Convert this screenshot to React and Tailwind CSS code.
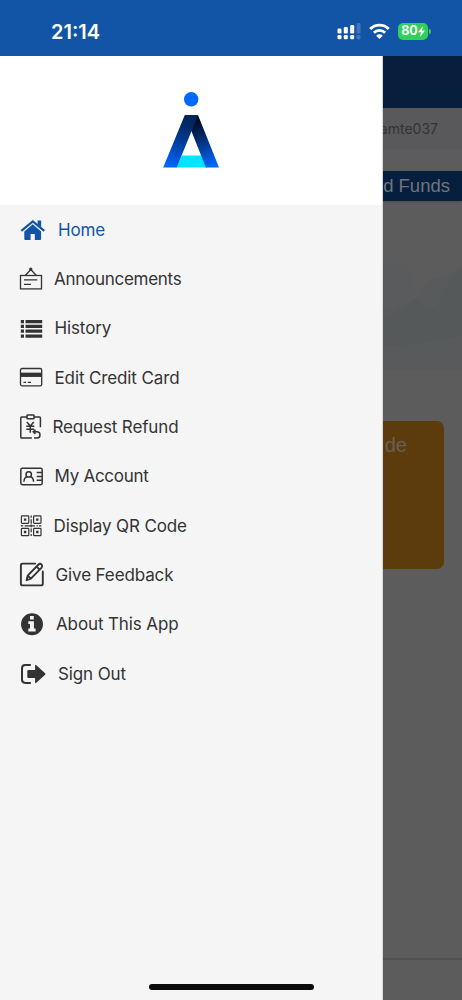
// Icons
const HomeIcon = () => (
    <svg className="size-[30px]" viewBox="0 0 30 30" fill="currentColor">
        <path d="M19.6 5.6h3.6v6.6l-3.600-3z" />
        <path d="M3.300 15.900 14.800 6.400l11.500 9.500" fill="none" stroke="currentColor" strokeWidth="2.200" />
        <path d="M14.800 9.300 6.300 16.400v7.600q0 1 1 1h5.300v-6.100h4.200V25h5.300q1 0 1-1v-7.600z" />
    </svg>
);

const AnnouncementIcon = () => (
    <svg className="size-[30px]" viewBox="0 0 30 30" fill="none" stroke="currentColor" strokeWidth="1.300">
        <rect x="2.500" y="11.500" width="21" height="13.400" />
        <path d="M7.300 11.500 12.800 5.500l5.500 6M6 15.800h13.300M6 20.300h7" />
        <circle cx="12.800" cy="5.200" r="1" fill="currentColor" />
    </svg>
);

const HistoryIcon = () => (
    <svg className="size-[30px]" viewBox="0 0 30 30" fill="currentColor">
        <path d="M2.800 6h3.200v3.200H2.800zM7.500 6h16.700v3.200H7.500zM2.800 10.800h3.200V14H2.800zM7.500 10.800h16.700V14H7.500zM2.800 15.600h3.200v3.200H2.800zM7.500 15.600h16.700v3.200H7.500zM2.800 20.500h3.200v3.200H2.800zM7.500 20.500h16.700v3.200H7.500z" />
    </svg>
);

const CardIcon = () => (
    <svg className="size-[30px]" viewBox="0 0 30 30" fill="none" stroke="currentColor" strokeWidth="1.300">
        <rect x="2.500" y="5.500" width="21.200" height="17.300" rx="1.600" />
        <path d="M2.500 11.800h21.200" strokeWidth="4.300" />
        <path d="M5.500 19.300h2.600M9.800 19.300h3.200" />
    </svg>
);

const RefundIcon = () => (
    <svg className="size-[30px]" viewBox="0 0 30 30" fill="none" stroke="currentColor" strokeWidth="1.500">
        <path d="M9 4.900H3.600q-.8 0-.8.800v19.500q0 .8.8.800h10.300M16 4.900h5.600q.8 0 .8.800v9.500" />
        <rect x="9" y="2.900" width="7" height="3.900" rx=".6" />
        <path d="M8.800 10l3.500 4 3.500-4M12.300 14v6.800M8.300 14.200h8M8.300 17.200h8" />
        <path d="M15.500 19.800h3.400a3.100 3.100 0 0 1 0 6.200H16M17.500 17.700l-2.300 2.100 2.300 2.100" />
    </svg>
);

const AccountIcon = () => (
    <svg className="size-[30px]" viewBox="0 0 30 30" fill="none" stroke="currentColor" strokeWidth="1.500">
        <rect x="2.800" y="6.300" width="21.400" height="16.400" rx="1.600" />
        <circle cx="10.700" cy="12.400" r="2.700" />
        <path d="M5.900 19.700q.3-4.400 3.300-5M15.600 19.700q-.3-4.400-3.300-5M18.700 10.500h5.200M18.700 14.400h5.200M18.700 18.300h5.200" />
    </svg>
);

const QrIcon = () => (
    <svg className="size-[30px]" viewBox="0 0 30 30" fill="none" stroke="currentColor" strokeWidth="1.200">
        <rect x="3.400" y="4.900" width="7.400" height="7.400" rx=".8" />
        <rect x="15.600" y="4.900" width="7.400" height="7.400" rx=".8" />
        <rect x="3.400" y="17.300" width="7.400" height="7.400" rx=".8" />
        <rect x="15.600" y="17.300" width="7.400" height="7.400" rx=".8" />
        <path d="M5.900 8.600h2.400M18.100 8.600h2.400M5.900 21h2.400M18.100 21h2.400" strokeWidth="2.400" />
        <path d="M13.200 4.500v2.200M13.200 8.300v4.500M13.200 13.500v2.700M13.200 17.500v3.800M13.200 22.900v2.200M2.800 14.800h2.400M6.600 14.800h10.400M18.500 14.800h1.300M21 14.800h2.400" />
    </svg>
);

const FeedbackIcon = () => (
    <svg className="size-[30px]" viewBox="0 0 30 30" fill="none" stroke="currentColor" strokeWidth="1.900" strokeLinecap="round" strokeLinejoin="round">
        <path d="M17.200 3.600H4.600q-1.700 0-1.700 1.700v18.400q0 1.700 1.700 1.700h18.500q1.700 0 1.700-1.700V11.500" />
        <path d="M8.600 20.200l1.100-4.600L20.500 4.500q1.500-1.300 3.100 0 1.300 1.500 0 3.100L12.900 18.700zM18.600 6.600l3 3M9.700 15.600l3.200 3.100" strokeWidth="1.900" />
    </svg>
);

const InfoIcon = () => (
    <svg className="size-[30px]" viewBox="0 0 30 30">
        <circle cx="14" cy="14.300" r="11" fill="currentColor" />
        <path d="M12 5.900h3.800v3.600H12zM10.300 11.200h5.600v7.300h1.700v2.900h-7.300v-2.900H12V14h-1.700z" fill="#f5f5f5" />
    </svg>
);

const SignOutIcon = () => (
    <svg className="size-[30px]" viewBox="0 0 30 30">
        <path d="M12.800 6.100H7.300q-3.300 0-3.300 3.300v11.200q0 3.300 3.300 3.300h5.500" fill="none" stroke="currentColor" strokeWidth="2" />
        <path d="M10.300 10.900h6.800V6.700q0-1.400 1.200-.5l8.800 8.100q.8.700 0 1.400l-8.800 8.100q-1.200.9-1.200-.5v-4.200h-6.800q-1 0-1-1v-6.200q0-1 1-1z" fill="currentColor" />
    </svg>
);

const Logo = () => (
    <svg className="h-[78px] w-[58px]" viewBox="0 0 58 78">
        <defs>
            <linearGradient id="leftLeg" x1="24" y1="30" x2="6" y2="76" gradientUnits="userSpaceOnUse">
                <stop offset="0" stopColor="#00265c" />
                <stop offset="0.350" stopColor="#003789" />
                <stop offset="1" stopColor="#0068ff" />
            </linearGradient>
            <linearGradient id="rightLeg" x1="32" y1="30" x2="50" y2="76" gradientUnits="userSpaceOnUse">
                <stop offset="0" stopColor="#000b24" />
                <stop offset="0.300" stopColor="#00245c" />
                <stop offset="1" stopColor="#006aff" />
            </linearGradient>
        </defs>
        <circle cx="29.200" cy="8.300" r="7.200" fill="#0068ff" />
        <path d="M20 64.500h20l5.500 12H14.500z" fill="#00e5ff" />
        <path d="M36 24 57 76.500H43.800L29.200 39.500 25 30z" fill="url(#rightLeg)" />
        <path d="M22.800 24H36L14.800 76.500H1.200z" fill="url(#leftLeg)" />
    </svg>
);

const menuItems = [
    { label: "Home", Icon: HomeIcon, gap: "ml-2.5", color: "text-[#1255a6]" },
    { label: "Announcements", Icon: AnnouncementIcon, gap: "ml-1.5 tracking-[-0.270px]", color: "text-[#333]" },
    { label: "History", Icon: HistoryIcon, gap: "ml-[6.500px]", color: "text-[#333]" },
    { label: "Edit Credit Card", Icon: CardIcon, gap: "ml-[6.500px]", color: "text-[#333]" },
    { label: "Request Refund", Icon: RefundIcon, gap: "ml-[4.500px]", color: "text-[#333]" },
    { label: "My Account", Icon: AccountIcon, gap: "ml-[6.500px] tracking-[-0.270px]", color: "text-[#333]" },
    { label: "Display QR Code", Icon: QrIcon, gap: "ml-[5.500px]", color: "text-[#333]" },
    { label: "Give Feedback", Icon: FeedbackIcon, gap: "ml-[7.500px]", color: "text-[#333]" },
    { label: "About This App", Icon: InfoIcon, gap: "ml-2", color: "text-[#333]" },
    { label: "Sign Out", Icon: SignOutIcon, gap: "ml-2.5", color: "text-[#333]" },
];

function StatusBar() {
    return (
        <div className="flex h-14 shrink-0 items-center justify-between bg-[#1255a6] pt-[6px] pr-[31px] pl-[51px] text-white">
            <div className="pt-px text-[20px] leading-none font-semibold">21:14</div>
            <div className="flex items-center">
                <svg className="h-[17px] w-6" viewBox="0 0 24 17" fill="currentColor">
                    <rect x="0.500" y="5.500" width="4" height="5" rx="1.300" />
                    <rect x="6.800" y="4" width="4" height="6.500" rx="1.300" />
                    <rect x="13.200" y="2" width="4" height="8.500" rx="1.300" />
                    <rect x="0.500" y="12" width="4" height="4.200" rx="1.300" />
                    <rect x="6.800" y="12" width="4" height="4.200" rx="1.300" />
                    <rect x="13.200" y="12" width="4" height="4.200" rx="1.300" />
                    <rect x="19.500" y="0" width="4" height="10.500" rx="1.300" opacity="0.200" />
                    <rect x="19.500" y="12" width="4" height="4.200" rx="1.300" opacity="0.200" />
                </svg>
                <svg className="ml-2 h-[17px] w-[21px]" viewBox="0 0 21 17" fill="none" stroke="currentColor" strokeWidth="2.900">
                    <path d="M1.200 6a13.200 13.200 0 0 1 18.600 0M4.900 9.700a8 8 0 0 1 11.200 0" />
                    <path d="M10.500 16 7.200 12.700a4.700 4.700 0 0 1 6.600 0z" fill="currentColor" stroke="none" />
                </svg>
                <div className="ml-2 flex h-[17px] w-[30px] items-center justify-center rounded-[5px] bg-[#30d158] pt-px text-[12.500px] leading-none font-bold">
                    80
                    <svg className="h-[11px] w-[7px]" viewBox="0 0 7 11" fill="currentColor">
                        <path d="M5 0 0 6.200H3L2 11l5-6.400H4z" />
                    </svg>
                </div>
                <div className="ml-px h-[5px] w-[2px] rounded-r-full bg-[#30d158]" />
            </div>
        </div>
    );
}

function Drawer() {
    return (
        <aside className="flex w-[383px] shrink-0 flex-col border-r border-[#d8d8d8] bg-[#f5f5f5]">
            <div className="flex h-[149px] shrink-0 justify-center bg-white pt-[35px]">
                <Logo />
            </div>
            <nav className="flex flex-col pt-[0.500px]">
                {menuItems.map(({ label, Icon, gap, color }) => (
                    <a key={label} className={`flex h-[49.300px] items-center pl-[18px] ${color}`}>
                        <Icon />
                        <span className={`pt-px text-[17px] tracking-[-0.120px] ${gap}`}>{label}</span>
                    </a>
                ))}
            </nav>
            <div className="mt-auto mr-[68px] mb-[10px] h-[6px] w-[165px] self-end rounded-full bg-[#0b0b0b]" />
        </aside>
    );
}

function DimmedPage() {
    return (
        <main className="flex flex-1 flex-col overflow-hidden bg-[#5c5c5c] whitespace-nowrap">
            <div className="h-[52px] shrink-0 bg-[#071f3d]" />
            <div className="flex h-[41px] shrink-0 items-center justify-end bg-[#59595b] pr-6 text-[14px] text-[#333]">
                amte037
            </div>
            <div className="mt-[22px] flex h-[30px] shrink-0 items-center justify-end bg-[#071f3f] pr-3 font-['Liberation_Sans'] text-[18.500px] text-[#70757b] shadow-sm">
                d Funds
            </div>
            <svg className="mt-[61px] h-[110px] w-full shrink-0" viewBox="0 0 79 110" preserveAspectRatio="none">
                <path d="M0 4Q24-8 33 31Q20 47 0 47z" fill="#595b5d" />
                <path d="M0 47Q20 47 35 34Q43 16 55 16Q66 16 79 2v106H0z" fill="#595a5c" />
                <path d="M0 53Q22 48 33 37q15 19 26-2Q66 17 79 5v69Q30 84 0 84z" fill="#56595a" />
            </svg>
            <div className="mt-[49px] mr-[18px] flex h-[148px] shrink-0 justify-end rounded-r-[7px] bg-[#5c3c0d] pt-3 pr-[37px] font-['Liberation_Sans'] text-[20px] leading-6 text-[#686058]">
                de
            </div>
            <div className="mt-auto h-[42px] shrink-0 border-t-2 border-[#505050]" />
        </main>
    );
}

function App() {
    return (
        <div className="flex h-[1000px] w-[462px] flex-col overflow-hidden font-['Inter',sans-serif]">
            <StatusBar />
            <div className="flex min-h-0 flex-1">
                <Drawer />
                <DimmedPage />
            </div>
        </div>
    );
}

export default App;
